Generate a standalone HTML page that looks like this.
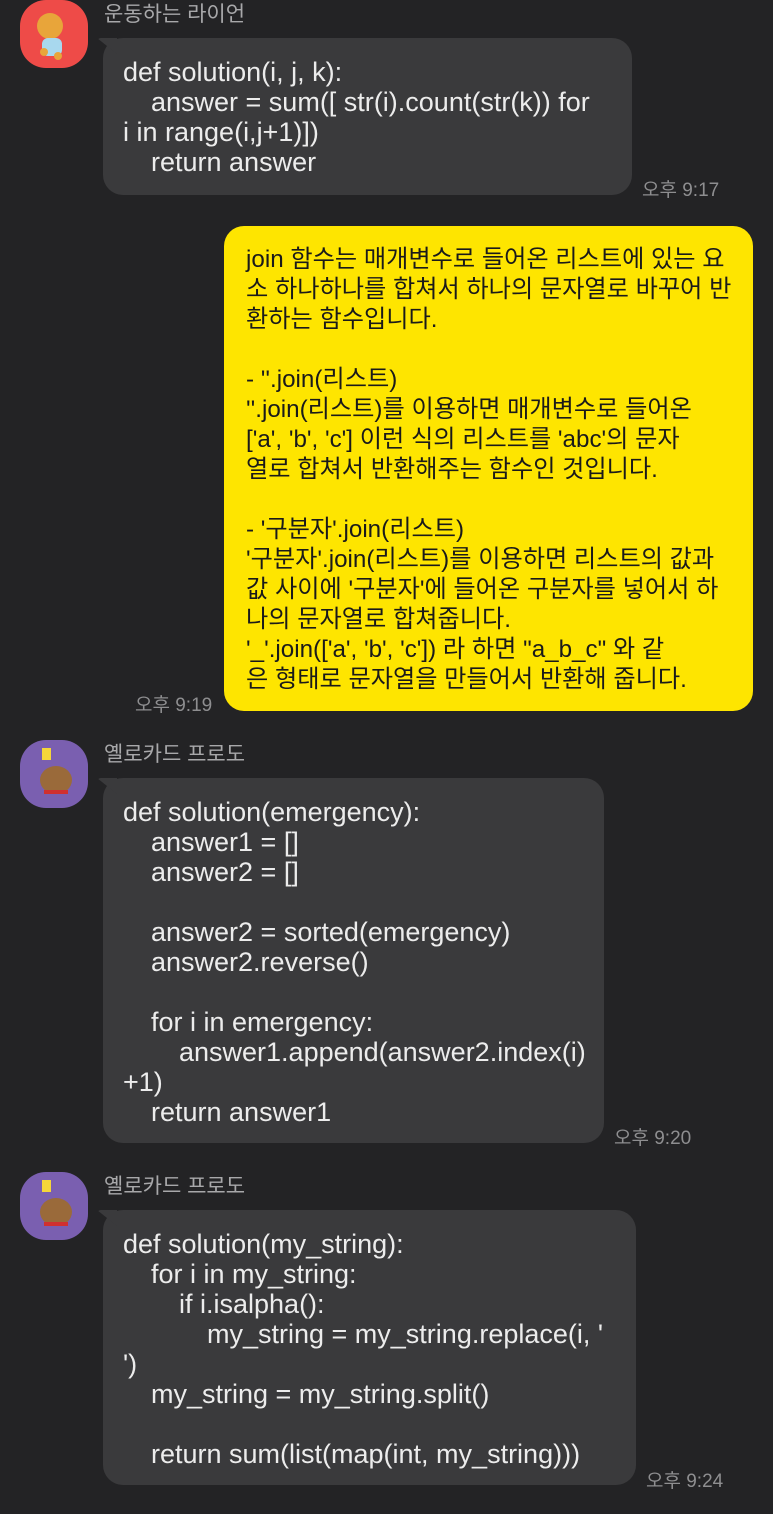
<!DOCTYPE html>
<html><head><meta charset="utf-8"><style>
body{margin:0;background:#232325;width:773px;height:1514px;position:relative;overflow:hidden;font-family:"Liberation Sans","Noto Sans CJK KR",sans-serif;}
.av{position:absolute;left:20px;width:68px;height:68px;border-radius:26px;}
.name{position:absolute;left:104px;font-size:21px;color:#a8a8aa;line-height:28px;}
.b{position:absolute;background:#3a3a3c;border-radius:20px;color:#ececec;font-size:27px;line-height:30px;padding:0;white-space:nowrap;box-sizing:border-box;}
.b.g::before{content:"";position:absolute;left:-6px;top:0;width:20px;height:16px;background:#3a3a3c;border-radius:4px 0 0 0;clip-path:polygon(0 0,100% 0,100% 100%);}
.y{position:absolute;background:#fee500;border-radius:20px;color:#1a1a1a;font-size:24.2px;line-height:30px;white-space:nowrap;box-sizing:border-box;}
.t{position:absolute;font-size:19px;color:#8e8e90;}
.l{display:block;height:30px}
.i1{padding-left:28px}.i2{padding-left:56px}.i3{padding-left:84px}
</style></head><body>

<div class="av" style="top:0;background:#ee4b48"><svg width="68" height="68"><circle cx="30" cy="26" r="13" fill="#e8a53a"/><rect x="22" y="38" width="20" height="18" rx="6" fill="#a8d8ee"/><circle cx="24" cy="52" r="4" fill="#e8a53a"/><circle cx="38" cy="56" r="4" fill="#e8a53a"/></svg></div>
<div class="name" style="top:1px">운동하는 라이언</div>
<div class="b g" style="left:103px;top:38px;width:529px;height:157px;padding:19px 20px">
<span class="l">def solution(i, j, k):</span><span class="l i1">answer = sum([ str(i).count(str(k)) for</span><span class="l">i in range(i,j+1)])</span><span class="l i1">return answer</span></div>
<div class="t" style="left:642px;top:175px">오후 9:17</div>

<div class="y" style="left:224px;top:226px;width:529px;height:485px;padding:19px 22px">
<span class="l">join 함수는 매개변수로 들어온 리스트에 있는 요</span><span class="l">소 하나하나를 합쳐서 하나의 문자열로 바꾸어 반</span><span class="l">환하는 함수입니다.</span><span class="l"></span><span class="l">- ''.join(리스트)</span><span class="l">''.join(리스트)를 이용하면 매개변수로 들어온</span><span class="l">['a', 'b', 'c'] 이런 식의 리스트를 'abc'의 문자</span><span class="l">열로 합쳐서 반환해주는 함수인 것입니다.</span><span class="l"></span><span class="l">- '구분자'.join(리스트)</span><span class="l">'구분자'.join(리스트)를 이용하면 리스트의 값과</span><span class="l">값 사이에 '구분자'에 들어온 구분자를 넣어서 하</span><span class="l">나의 문자열로 합쳐줍니다.</span><span class="l">'_'.join(['a', 'b', 'c']) 라 하면 "a_b_c" 와 같</span><span class="l">은 형태로 문자열을 만들어서 반환해 줍니다.</span></div>
<div class="t" style="left:135px;top:690px">오후 9:19</div>

<div class="av" style="top:740px;background:#7a5fb0"><svg width="68" height="68"><rect x="22" y="8" width="9" height="12" fill="#f5d63a"/><ellipse cx="36" cy="40" rx="16" ry="14" fill="#9a6a3a"/><rect x="24" y="50" width="24" height="4" fill="#d03030"/></svg></div>
<div class="name" style="top:741px">옐로카드 프로도</div>
<div class="b g" style="left:103px;top:778px;width:501px;height:365px;padding:19px 20px">
<span class="l">def solution(emergency):</span><span class="l i1">answer1 = []</span><span class="l i1">answer2 = []</span><span class="l"></span><span class="l i1">answer2 = sorted(emergency)</span><span class="l i1">answer2.reverse()</span><span class="l"></span><span class="l i1">for i in emergency:</span><span class="l i2">answer1.append(answer2.index(i)</span><span class="l">+1)</span><span class="l i1">return answer1</span></div>
<div class="t" style="left:614px;top:1123px">오후 9:20</div>

<div class="av" style="top:1172px;background:#7a5fb0"><svg width="68" height="68"><rect x="22" y="8" width="9" height="12" fill="#f5d63a"/><ellipse cx="36" cy="40" rx="16" ry="14" fill="#9a6a3a"/><rect x="24" y="50" width="24" height="4" fill="#d03030"/></svg></div>
<div class="name" style="top:1173px">옐로카드 프로도</div>
<div class="b g" style="left:103px;top:1210px;width:533px;height:275px;padding:19px 20px">
<span class="l">def solution(my_string):</span><span class="l i1">for i in my_string:</span><span class="l i2">if i.isalpha():</span><span class="l i3">my_string = my_string.replace(i, '</span><span class="l">')</span><span class="l i1">my_string = my_string.split()</span><span class="l"></span><span class="l i1">return sum(list(map(int, my_string)))</span></div>
<div class="t" style="left:646px;top:1466px">오후 9:24</div>
</body></html>
